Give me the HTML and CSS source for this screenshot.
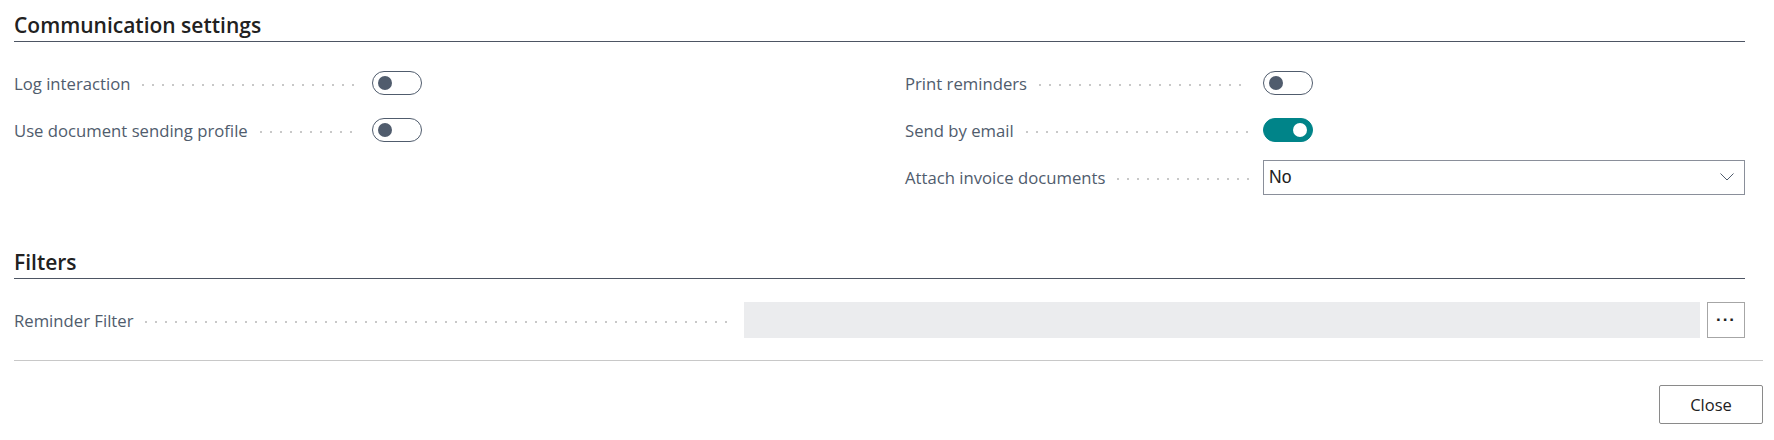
FILE: index.html
```html
<!DOCTYPE html>
<html lang="en">
<head>
    <meta charset="UTF-8">
    <title>Reminder settings</title>
    <link rel="stylesheet" href="styles.css">
</head>
<body>
    <div class="page">
        <section class="group">
            <h2 class="group-title">Communication settings</h2>
            <div class="columns">
                <div class="column">
                    <div class="field">
                        <span class="caption">Log interaction</span>
                        <span class="toggle"></span>
                    </div>
                    <div class="field">
                        <span class="caption">Use document sending profile</span>
                        <span class="toggle"></span>
                    </div>
                </div>
                <div class="column">
                    <div class="field">
                        <span class="caption">Print reminders</span>
                        <span class="toggle"></span>
                    </div>
                    <div class="field">
                        <span class="caption">Send by email</span>
                        <span class="toggle on"></span>
                    </div>
                    <div class="field">
                        <span class="caption">Attach invoice documents</span>
                        <div class="select">
                            <span>No</span>
                            <svg width="14" height="8" viewBox="0 0 14 8"><path d="M0.5 0.5 L7 7 L13.5 0.5" fill="none" stroke="#505c6d" stroke-width="1"/></svg>
                        </div>
                    </div>
                </div>
            </div>
        </section>

        <section class="group filters">
            <h2 class="group-title">Filters</h2>
            <div class="field wide">
                <span class="caption">Reminder Filter</span>
                <div class="filter-input"></div>
                <button class="assist" type="button">&middot;&middot;&middot;</button>
            </div>
        </section>

        <div class="footer">
            <button class="close-btn" type="button">Close</button>
        </div>
    </div>
</body>
</html>
```

FILE: styles.css
```css
body {
    margin: 0;
    font-family: "Open Sans", "Noto Sans", sans-serif;
    color: #212121;
    background: white;
}

.page {
    padding: 9px 11px 0 14px;
}

.group {
    margin-right: 18px;
}

.group-title {
    margin: 0;
    font-size: 21px;
    font-weight: 600;
    line-height: 32px;
    height: 32px;
    border-bottom: 1px solid #4d5563;
    color: #212121;
}

.columns {
    display: grid;
    grid-template-columns: 840px 840px;
    column-gap: 51px;
    padding-top: 23px;
}

.column {
    display: flex;
    flex-direction: column;
    gap: 11px;
}

.field {
    display: flex;
    align-items: center;
    height: 36px;
}

/* etiqueta con la linea de puntos */
.caption {
    width: 358px;
    flex-shrink: 0;
    display: flex;
    align-items: center;
    font-size: 16.7px;
    color: #505c6d;
    white-space: nowrap;
}

.caption::after {
    content: "";
    flex: 1;
    height: 4px;
    margin: 4px 14px 0 8px;
    background-image: radial-gradient(circle, #c8c8c8 1px, transparent 1.3px);
    background-size: 10px 4px;
    background-repeat: repeat-x;
}

.toggle {
    position: relative;
    width: 48px;
    height: 22px;
    border: 1px solid #505c6d;
    border-radius: 12px;
    box-sizing: content-box;
}

.toggle::before {
    content: "";
    position: absolute;
    left: 5px;
    top: 4px;
    width: 14px;
    height: 14px;
    border-radius: 50%;
    background: #505c6d;
}

.toggle.on {
    background: #008489;
    border-color: #008489;
}

.toggle.on::before {
    left: auto;
    right: 5px;
    background: white;
}

.select {
    flex: 1;
    height: 33px;
    border: 1px solid #8a8f9a;
    display: flex;
    align-items: center;
    justify-content: space-between;
    padding: 0 10px 0 5px;
    font-family: "Liberation Sans", Arial, sans-serif;
    font-size: 17.5px;
}

.filters {
    margin-top: 51px;
}

.filters .field {
    margin-top: 23px;
}

.wide .caption {
    width: 730px;
}

.filter-input {
    flex: 1;
    height: 36px;
    background: #ebecee;
}

.assist {
    margin-left: 7px;
    width: 38px;
    height: 36px;
    border: 1px solid #a6a6a6;
    background: white;
    font-size: 17px;
    font-weight: bold;
    letter-spacing: 1px;
    color: #212121;
    padding: 0;
}

.footer {
    margin-top: 22px;
    border-top: 1px solid #c8c8c8;
    padding-top: 24px;
    display: flex;
    justify-content: flex-end;
}

.close-btn {
    width: 104px;
    height: 39px;
    border: 1px solid #8a8a8a;
    border-radius: 2px;
    background: white;
    font-family: "Open Sans", sans-serif;
    font-size: 16.5px;
    color: #212121;
}
```
